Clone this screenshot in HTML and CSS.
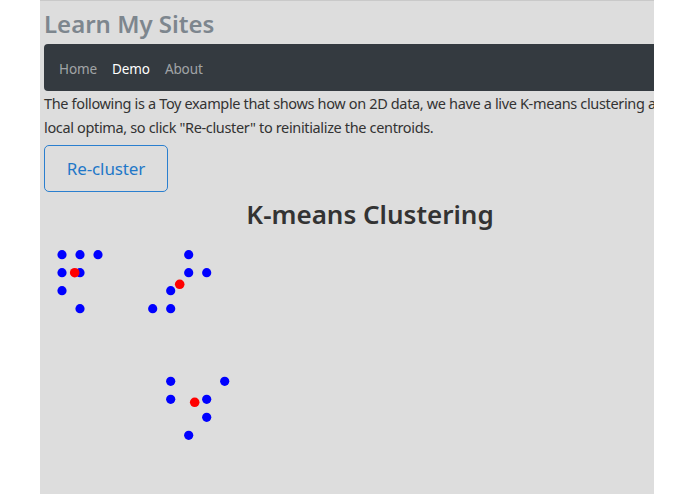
FILE: index.html
```html
<!DOCTYPE html>
<html>
<head>
<meta charset="utf-8">
<link rel="stylesheet" href="styles.css">
</head>
<body>
<div class="frame">
  <div class="page">
    <h1 class="brand">Learn My Sites</h1>
    <nav class="navbar">
      <a class="nav-link">Home</a>
      <a class="nav-link active">Demo</a>
      <a class="nav-link">About</a>
    </nav>
    <p class="intro"><span class="line">The following is a Toy example that shows how on 2D data, we have a live K-means clustering algorithm running. K-means can get stuck in</span><span class="line">local optima, so click "Re-cluster" to reinitialize the centroids.</span></p>
    <button class="btn-outline">Re-cluster</button>
    <h2 class="title">K-means Clustering</h2>
    <svg class="plot" width="400" height="240" viewBox="0 0 400 240">
      <g fill="#0000ff">
        <circle cx="18" cy="13.7" r="4.6"/>
        <circle cx="36" cy="13.7" r="4.6"/>
        <circle cx="54" cy="13.7" r="4.6"/>
        <circle cx="18" cy="31.7" r="4.6"/>
        <circle cx="36" cy="31.7" r="4.6"/>
        <circle cx="18" cy="49.7" r="4.6"/>
        <circle cx="36" cy="67.7" r="4.6"/>
        <circle cx="144.7" cy="13.7" r="4.6"/>
        <circle cx="144.7" cy="31.7" r="4.6"/>
        <circle cx="162.7" cy="31.7" r="4.6"/>
        <circle cx="126.7" cy="49.7" r="4.6"/>
        <circle cx="108.7" cy="67.7" r="4.6"/>
        <circle cx="126.7" cy="67.7" r="4.6"/>
        <circle cx="126.7" cy="140.3" r="4.6"/>
        <circle cx="180.7" cy="140.3" r="4.6"/>
        <circle cx="126.7" cy="158.3" r="4.6"/>
        <circle cx="162.7" cy="158.3" r="4.6"/>
        <circle cx="162.7" cy="176.3" r="4.6"/>
        <circle cx="144.7" cy="194.3" r="4.6"/>
      </g>
      <g fill="#ff0000">
        <circle cx="30.7" cy="31.7" r="4.8"/>
        <circle cx="135.7" cy="43.3" r="4.8"/>
        <circle cx="150.7" cy="161.3" r="4.8"/>
      </g>
    </svg>
  </div>
</div>
</body>
</html>
```
FILE: styles.css
```css
html, body {
  margin: 0;
  padding: 0;
  background: #ffffff;
}
.frame {
  margin-left: 40px;
  width: 610px;
  height: 493px;
  padding-left: 4px;
  border-top: 1px solid #c9c9c9;
  background: #dddddd;
  overflow: hidden;
}
.page {
  width: 652px;
  font-family: "Noto Sans", "DejaVu Sans", sans-serif;
  color: #333333;
}
.brand {
  margin: 0;
  padding-top: 7px;
  height: 36px;
  font-size: 24px;
  line-height: 32px;
  font-weight: 600;
  color: #7d868e;
}
.navbar {
  display: flex;
  align-items: center;
  gap: 15px;
  height: 45px;
  padding: 2px 15px 0;
  background: #343a40;
  border-radius: 4px 0 0 4px;
}
.nav-link {
  font-size: 13.5px;
  letter-spacing: -0.1px;
  color: rgba(255, 255, 255, 0.55);
}
.nav-link.active {
  color: #ffffff;
}
.intro {
  margin: 0;
  font-size: 14.5px;
  line-height: 24px;
  letter-spacing: -0.35px;
  color: #333333;
}
.line {
  display: block;
  white-space: nowrap;
}
.btn-outline {
  display: block;
  margin-top: 6px;
  width: 124px;
  height: 47px;
  padding: 0 0 1px;
  font-family: inherit;
  font-size: 17px;
  letter-spacing: -0.1px;
  color: #1f78c8;
  background: transparent;
  border: 1px solid #2a7fcf;
  border-radius: 5px;
}
.title {
  margin: 5px 0 0;
  text-align: center;
  font-size: 26px;
  line-height: 34px;
  font-weight: 600;
  color: #333333;
}
.plot {
  display: block;
  margin-top: 10px;
}
```
